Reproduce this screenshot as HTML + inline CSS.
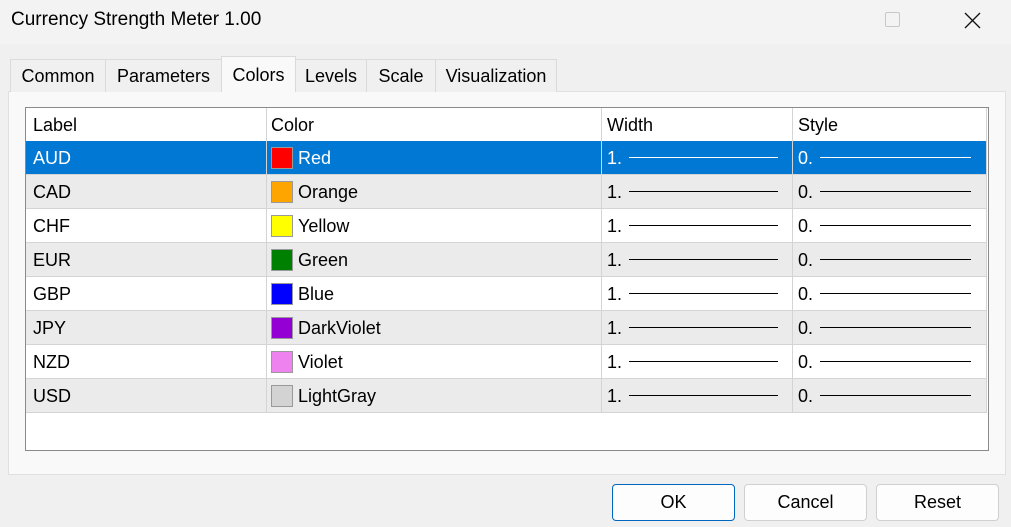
<!DOCTYPE html>
<html><head><style>
*{margin:0;padding:0;box-sizing:border-box}
body{width:1011px;height:527px;background:#f0f0f0;font-family:"Liberation Sans",sans-serif;position:relative;overflow:hidden;color:#000}
.title{position:absolute;left:0;top:0;width:1011px;height:44px;background:#f3f3f3}
.title span{position:absolute;left:11px;top:9px;font-size:19px}
.max{position:absolute;left:885px;top:12px;width:15px;height:15px;border:1px solid #c8c8c8;border-radius:2px}
.tab{position:absolute;top:59px;height:33px;border:1px solid #dadada;border-bottom:none;background:#f0f0f0;font-size:18px;text-align:center;line-height:33px}
.tab.a{top:56px;height:36px;background:#f9f9f9;line-height:36px;z-index:2}
.panel{position:absolute;left:8px;top:91px;width:998px;height:384px;background:#f9f9f9;border:1px solid #e0e0e0}
.tbl{position:absolute;left:25px;top:107px;width:964px;height:344px;background:#fff;border:1px solid #8a8a8a}
.row{position:absolute;left:0;width:961px;height:34px;border-bottom:1px solid #d4d4d4;font-size:18px}
.c{position:absolute;top:0;height:33px;line-height:34px;padding-left:7px;border-right:1px solid #d4d4d4}
.c1{left:0;width:241px}.c2{left:241px;width:335px;padding-left:4px}.c3{left:576px;width:191px;padding-left:5px}.c4{left:767px;width:194px;padding-left:5px;border-right:1px solid #d4d4d4}
.sw{position:absolute;left:4px;top:6px;width:22px;height:22px;border:1px solid #999}
.nm{position:absolute;left:31px;top:0}
.ln{position:absolute;top:16px;height:1px;background:#000}
.sel{background:#0078d4;color:#fff}.sel .ln{background:#fff}
.alt{background:#ebebeb}
.btn{position:absolute;top:484px;width:123px;height:37px;border:1px solid #d0d0d0;border-radius:4px;background:#fdfdfd;font-size:18px;text-align:center;line-height:35px}
</style></head><body>
<div class="title"><span>Currency Strength Meter 1.00</span>
<div class="max"></div>
<svg style="position:absolute;left:964px;top:12px" width="17" height="17"><path d="M1 1L16 16M16 1L1 16" stroke="#111" stroke-width="1.3"/></svg></div>
<div class="panel"></div>
<div class="tab" style="left:10px;width:96px">Common</div>
<div class="tab" style="left:105px;width:117px">Parameters</div>
<div class="tab a" style="left:221px;width:75px">Colors</div>
<div class="tab" style="left:295px;width:72px">Levels</div>
<div class="tab" style="left:366px;width:70px">Scale</div>
<div class="tab" style="left:435px;width:122px">Visualization</div>
<div class="tbl">
<div class="row" style="top:0;border-bottom:none"><div class="c c1">Label</div><div class="c c2">Color</div><div class="c c3">Width</div><div class="c c4">Style</div></div>
<div class="row sel" style="top:33px"><div class="c c1">AUD</div><div class="c c2"><div class="sw" style="background:#f00"></div><span class="nm">Red</span></div><div class="c c3">1.<div class="ln" style="left:27px;width:149px"></div></div><div class="c c4">0.<div class="ln" style="left:27px;width:151px"></div></div></div>
<div class="row alt" style="top:67px"><div class="c c1">CAD</div><div class="c c2"><div class="sw" style="background:#ffa500"></div><span class="nm">Orange</span></div><div class="c c3">1.<div class="ln" style="left:27px;width:149px"></div></div><div class="c c4">0.<div class="ln" style="left:27px;width:151px"></div></div></div>
<div class="row" style="top:101px"><div class="c c1">CHF</div><div class="c c2"><div class="sw" style="background:#ff0"></div><span class="nm">Yellow</span></div><div class="c c3">1.<div class="ln" style="left:27px;width:149px"></div></div><div class="c c4">0.<div class="ln" style="left:27px;width:151px"></div></div></div>
<div class="row alt" style="top:135px"><div class="c c1">EUR</div><div class="c c2"><div class="sw" style="background:#008000"></div><span class="nm">Green</span></div><div class="c c3">1.<div class="ln" style="left:27px;width:149px"></div></div><div class="c c4">0.<div class="ln" style="left:27px;width:151px"></div></div></div>
<div class="row" style="top:169px"><div class="c c1">GBP</div><div class="c c2"><div class="sw" style="background:#00f"></div><span class="nm">Blue</span></div><div class="c c3">1.<div class="ln" style="left:27px;width:149px"></div></div><div class="c c4">0.<div class="ln" style="left:27px;width:151px"></div></div></div>
<div class="row alt" style="top:203px"><div class="c c1">JPY</div><div class="c c2"><div class="sw" style="background:#9400d3"></div><span class="nm">DarkViolet</span></div><div class="c c3">1.<div class="ln" style="left:27px;width:149px"></div></div><div class="c c4">0.<div class="ln" style="left:27px;width:151px"></div></div></div>
<div class="row" style="top:237px"><div class="c c1">NZD</div><div class="c c2"><div class="sw" style="background:#ee82ee"></div><span class="nm">Violet</span></div><div class="c c3">1.<div class="ln" style="left:27px;width:149px"></div></div><div class="c c4">0.<div class="ln" style="left:27px;width:151px"></div></div></div>
<div class="row alt" style="top:271px"><div class="c c1">USD</div><div class="c c2"><div class="sw" style="background:#d3d3d3"></div><span class="nm">LightGray</span></div><div class="c c3">1.<div class="ln" style="left:27px;width:149px"></div></div><div class="c c4">0.<div class="ln" style="left:27px;width:151px"></div></div></div>
</div>
<div class="btn" style="left:612px;border-color:#0067c0">OK</div>
<div class="btn" style="left:744px">Cancel</div>
<div class="btn" style="left:876px">Reset</div>
</body></html>
